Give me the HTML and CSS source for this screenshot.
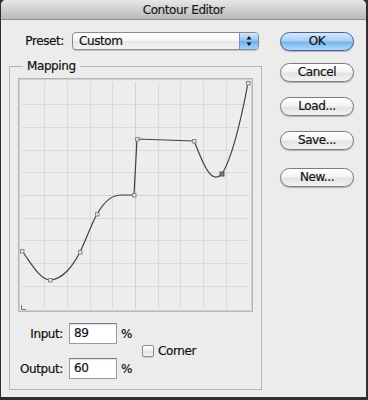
FILE: index.html
```html
<html lang="en">
<head>
  <meta charset="UTF-8">
  <title>Contour Editor</title>
  <link rel="stylesheet" href="styles.css">
</head>
<body>

  <div class="window">
    <div class="titlebar">Contour Editor</div>
    <div class="content">

      <div class="main">
        <div class="preset-row">
          <span class="preset-label">Preset:</span>
          <div class="select">
            <span class="select-value">Custom</span>
            <span class="select-arrows">
              <svg width="18" height="16" viewBox="0 0 18 16">
                <path d="M6.5 6.5 L11.5 6.5 L9 3 Z" fill="#111"/>
                <path d="M6.5 9.5 L11.5 9.5 L9 13 Z" fill="#111"/>
              </svg>
            </span>
          </div>
        </div>

        <fieldset class="group">
          <legend>Mapping</legend>

          <svg class="graph" width="235" height="234" viewBox="18 78 235 234">
            <rect x="18" y="78" width="235" height="234" fill="#b6b6b6"/>
            <rect x="19" y="79" width="233" height="232" fill="#d0d0d0"/>
            <rect x="20" y="80" width="231" height="230" fill="#ededed"/>
            <g stroke="#dadada" stroke-width="1">
              <path d="M44.5 82 V309 M67.5 82 V309 M90.5 82 V309 M112.5 82 V309 M158.5 82 V309 M180.5 82 V309 M203.5 82 V309 M226.5 82 V309"/>
              <path d="M22 104.5 H249 M22 127.5 H249 M22 150.5 H249 M22 172.5 H249 M22 218.5 H249 M22 240.5 H249 M22 263.5 H249 M22 286.5 H249"/>
            </g>
            <g stroke="#d2d2d2" stroke-width="1">
              <path d="M135.5 82 V309 M22 195.5 H249"/>
            </g>
            <path d="M21.5 305 V309.5 H26" fill="none" stroke="#777" stroke-width="1"/>
            <path d="M22,251 C31,263 40,280 50,280 C62,280 73,266 80,252 C86,240 91,225 97,214 C106,199 113,195 122,195 L134,195 L137,139 L165,140 L194,141 C200,155 207,176 215,177 C218,177.5 220,176 222,174 C232,158 242,115 248,83"
                  fill="none" stroke="#404040" stroke-width="1.2"/>
            <g fill="#e4e4e4" stroke="#8a8a8a" stroke-width="1">
              <rect x="20.5" y="249.5" width="3.5" height="3.5"/>
              <rect x="48.5" y="278.5" width="3.5" height="3.5"/>
              <rect x="78.5" y="250.5" width="3.5" height="3.5"/>
              <rect x="95.5" y="212.5" width="3.5" height="3.5"/>
              <rect x="132.5" y="193.5" width="3.5" height="3.5"/>
              <rect x="135.5" y="137.5" width="3.5" height="3.5"/>
              <rect x="192.5" y="139.5" width="3.5" height="3.5"/>
              <rect x="246.5" y="81.5" width="3.5" height="3.5"/>
            </g>
            <rect x="220" y="172" width="4" height="4" fill="#7a7a7a" stroke="#555" stroke-width="1"/>
          </svg>

          <div class="fields">
            <div class="field-grid">
              <span class="field-label">Input:</span>
              <div class="text-box">89</div>
              <span class="unit">%</span>
              <span class="field-label">Output:</span>
              <div class="text-box">60</div>
              <span class="unit">%</span>
            </div>
            <label class="check">
              <span class="checkbox"></span>
              Corner
            </label>
          </div>
        </fieldset>
      </div>

      <div class="buttons">
        <div class="btn btn-default">OK</div>
        <div class="btn btn-cancel">Cancel</div>
        <div class="btn btn-load">Load...</div>
        <div class="btn btn-save">Save...</div>
        <div class="btn btn-new">New...</div>
      </div>

    </div>
  </div>

</body>
</html>
```

FILE: styles.css
```css
body {
  margin: 0;
  padding: 0;
  background: #2f2f2f;
  font-family: 'DejaVu Sans', sans-serif;
  font-size: 12px;
  letter-spacing: -0.4px;
  color: #111;
  -webkit-text-stroke: 0.2px;
}

.window {
  margin-left: 1px;
  width: 365px;
  height: 397px;
  background: #ececec;
  border-radius: 5px 5px 0 0;
  overflow: hidden;
}

.titlebar {
  height: 19px;
  line-height: 21px;
  text-align: center;
  color: #1c1c1c;
  background: linear-gradient(#e7e7e7, #bababa);
  border-bottom: 1px solid #8f8f8f;
}

.content {
  display: flex;
  padding: 12px 0 0 8px;
}

.main {
  width: 253px;
}

.preset-row {
  display: flex;
  align-items: center;
  height: 18px;
}

.preset-label {
  width: 55px;
  margin-right: 8px;
  text-align: right;
}

.select {
  display: flex;
  width: 187px;
  height: 18px;
  box-sizing: border-box;
  border: 1px solid #8a8a8a;
  border-radius: 4px;
  background: linear-gradient(#ffffff, #f5f5f5 50%, #e7e7e7 51%, #f3f3f3);
  box-shadow: 0 1px 1px rgba(0, 0, 0, 0.18);
}

.select-value {
  flex: 1;
  padding-left: 6px;
  line-height: 16px;
}

.select-arrows {
  width: 18px;
  height: 16px;
  border-left: 1px solid #7d8fb6;
  border-radius: 0 3px 3px 0;
  background: linear-gradient(#d2e6fa, #93c3f1 50%, #6eaaea 51%, #a4d4fb);
}

.select-arrows svg {
  display: block;
}

.group {
  box-sizing: border-box;
  width: 253px;
  margin: 9px 0 0 0;
  padding: 0 0 10px 0;
  border: 1px solid #b5b5b5;
  min-width: 0;
}

.group legend {
  margin-left: 13px;
  padding: 0 4px;
  line-height: 14px;
}

.graph {
  display: block;
  margin: 5px 0 0 8px;
}

.fields {
  display: flex;
  align-items: center;
  margin-top: 11px;
}

.field-grid {
  display: grid;
  grid-template-columns: 59px 48px 25px;
  row-gap: 14px;
  align-items: center;
}

.field-label {
  padding-right: 6px;
  text-align: right;
}

.text-box {
  height: 21px;
  box-sizing: border-box;
  padding-left: 4px;
  line-height: 19px;
  background: #fff;
  border: 1px solid #9c9c9c;
  border-top-color: #7b7b7b;
  box-shadow: inset 0 1px 1px rgba(0, 0, 0, 0.12);
}

.unit {
  margin-left: 4px;
}

.check {
  display: flex;
  align-items: center;
  gap: 4px;
}

.checkbox {
  width: 12px;
  height: 12px;
  box-sizing: border-box;
  border: 1px solid #8d8d8d;
  border-radius: 2px;
  background: linear-gradient(#ffffff, #f1f1f1 50%, #e2e2e2 51%, #f3f3f3);
  box-shadow: 0 1px 1px rgba(0, 0, 0, 0.15);
}

.buttons {
  display: flex;
  flex-direction: column;
  margin-left: 18px;
}

.btn {
  width: 74px;
  height: 19px;
  box-sizing: border-box;
  border: 1px solid #7c7c7c;
  border-radius: 10px;
  background: linear-gradient(#ffffff, #f4f4f4 45%, #e3e3e3 55%, #f2f2f2);
  box-shadow: 0 1px 1px rgba(0, 0, 0, 0.25);
  text-align: center;
  line-height: 17px;
}

.btn-default {
  border-color: #4d5fa0;
  background: linear-gradient(#d6e9fb, #a9d1f6 45%, #7ab5ee 55%, #abdbfc);
}

.btn-cancel { margin-top: 12px; }
.btn-load { margin-top: 15px; }
.btn-save { margin-top: 15px; }
.btn-new { margin-top: 18px; }
```
